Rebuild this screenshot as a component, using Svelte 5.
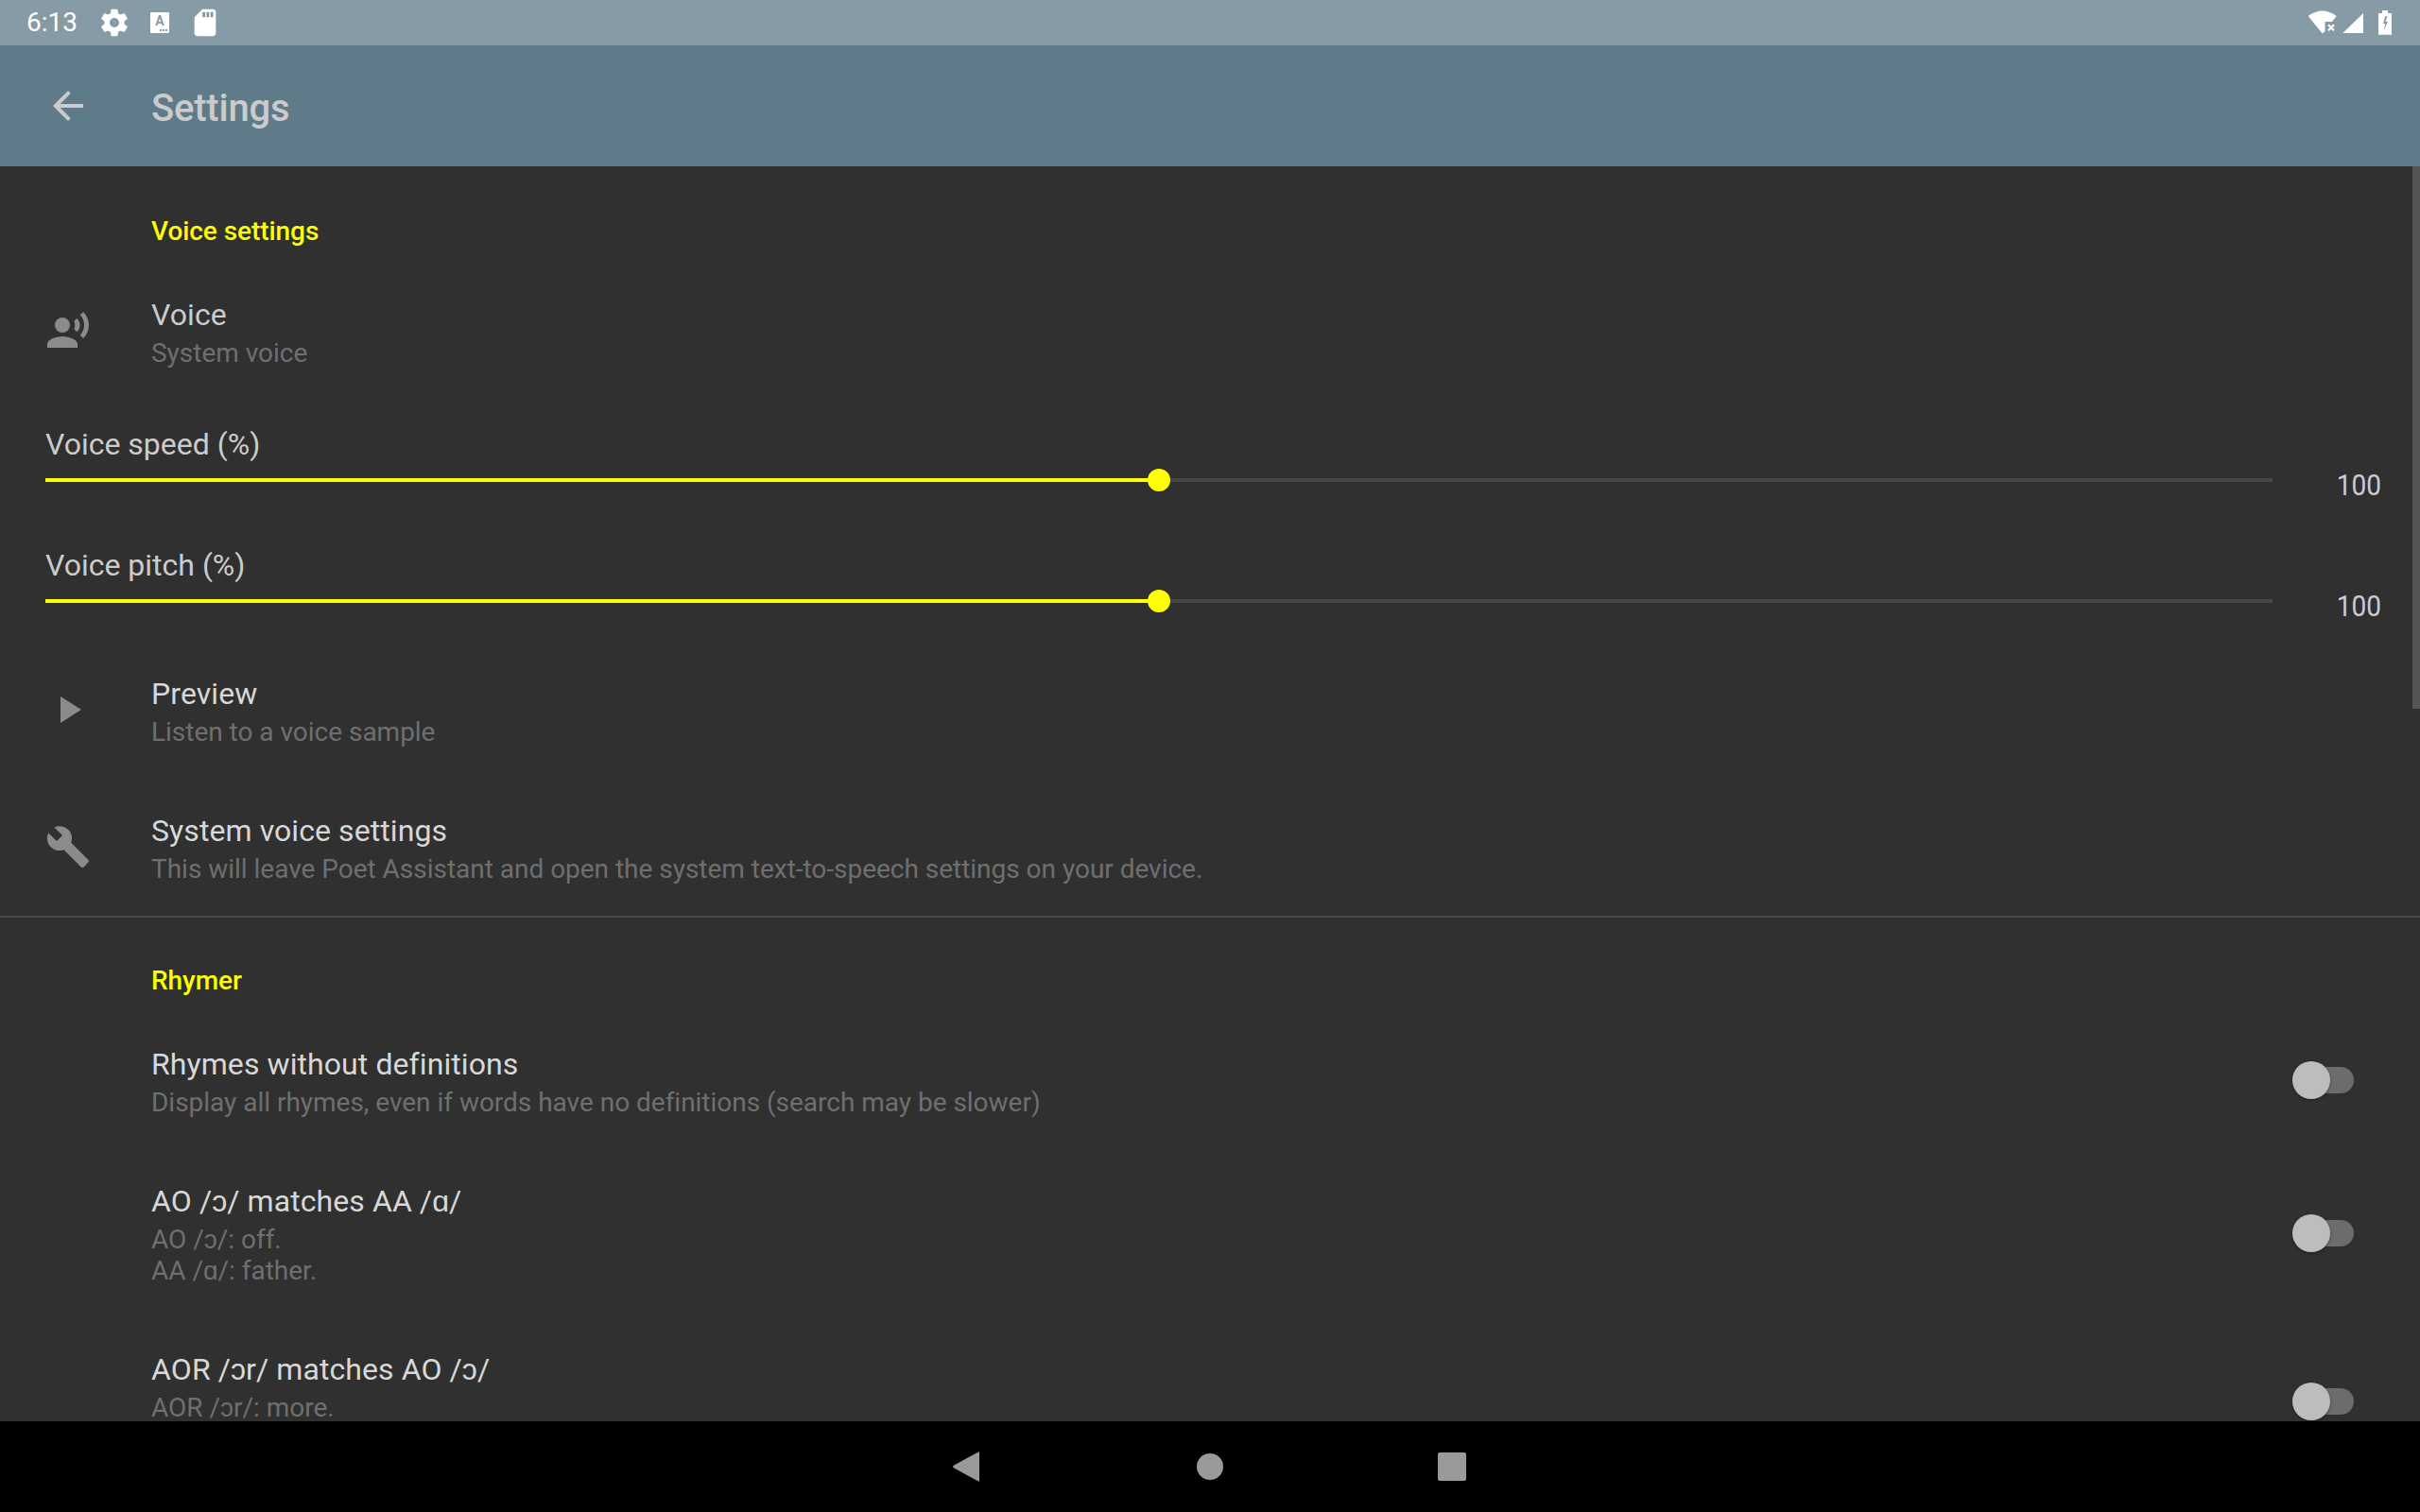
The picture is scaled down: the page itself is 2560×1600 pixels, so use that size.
<script>
    const sliders = [
        { label: "Voice speed (%)", value: 100, percent: 50 },
        { label: "Voice pitch (%)", value: 100, percent: 50 }
    ]

    const icons = {
        voice: "M9 15c-2.67 0-8 1.34-8 4v2h16v-2c0-2.66-5.33-4-8-4zm7.76-9.64l-1.68 1.69c.84 1.18.84 2.71 0 3.89l1.68 1.69c2.02-2.02 2.02-5.07 0-7.27zM20.07 2l-1.63 1.63c2.77 3.02 2.77 7.56 0 10.74L20.07 16c3.9-3.89 3.91-9.95 0-14zM9 5a4 4 0 1 0 0 8 4 4 0 0 0 0-8z",
        play: "M8 5v14l11-7z",
        build: "M22.7 19l-9.1-9.1c.9-2.3.4-5-1.5-6.9-2-2-5-2.4-7.4-1.3L9 6 6 9 1.6 4.7C.4 7.1.9 10.1 2.9 12.1c1.9 1.9 4.6 2.4 6.9 1.5l9.1 9.1c.4.4 1 .4 1.4 0l2.3-2.3c.5-.4.5-1.1.1-1.4z"
    }

    const rhymerRows = [
        {
            title: "Rhymes without definitions",
            summary: ["Display all rhymes, even if words have no definitions (search may be slower)"]
        },
        {
            title: "AO /ɔ/ matches AA /ɑ/",
            summary: ["AO /ɔ/: off.", "AA /ɑ/: father."]
        },
        {
            // second summary line is below the fold
            title: "AOR /ɔr/ matches AO /ɔ/",
            summary: ["AOR /ɔr/: more."],
            tall: true
        }
    ]
</script>

<div class="screen">
    <div class="status">
        <span class="time">6:13</span>
        <svg class="status-icon" viewBox="0 0 24 24"><path d="M19.43 12.98c.04-.32.07-.64.07-.98s-.03-.66-.07-.98l2.11-1.65c.19-.15.24-.42.12-.64l-2-3.46c-.12-.22-.39-.3-.61-.22l-2.49 1c-.52-.4-1.08-.73-1.69-.98l-.38-2.65C14.46 2.18 14.25 2 14 2h-4c-.25 0-.46.18-.49.42l-.38 2.65c-.61.25-1.17.59-1.69.98l-2.49-1c-.23-.09-.49 0-.61.22l-2 3.46c-.13.22-.07.49.12.64l2.11 1.65c-.04.32-.07.65-.07.98s.03.66.07.98l-2.11 1.65c-.19.15-.24.42-.12.64l2 3.46c.12.22.39.3.61.22l2.49-1c.52.4 1.08.73 1.69.98l.38 2.65c.03.24.24.42.49.42h4c.25 0 .46-.18.49-.42l.38-2.65c.61-.25 1.17-.59 1.69-.98l2.49 1c.23.09.49 0 .61-.22l2-3.46c.12-.22.07-.49-.12-.64l-2.11-1.65zM12 15.5c-1.93 0-3.5-1.57-3.5-3.5s1.57-3.5 3.5-3.5 3.5 1.57 3.5 3.5-1.57 3.5-3.5 3.5z"/></svg>
        <div class="keyboard">
            <span>A</span>
            <i></i>
        </div>
        <svg class="status-icon" viewBox="0 0 24 24"><path d="M18 2h-8L4.02 8 4 20c0 1.1.9 2 2 2h12c1.1 0 2-.9 2-2V4c0-1.1-.9-2-2-2zm-6 6h-2V4h2v4zm3 0h-2V4h2v4zm3 0h-2V4h2v4z"/></svg>

        <svg class="status-right" viewBox="0 0 90 48">
            <path d="M1.7 17Q16.7 6 31.7 17L27 23H19.5V33L16.7 35.5Z" />
            <path class="cross" d="M23 26.3l6 6M29 26.3l-6 6" />
            <path d="M38.3 35L60 14V35Z" />
            <path d="M80 11h6v3h4v22.7H76V14h4z" />
            <path class="bolt" d="M83.3 17.3L81 25h2.3l-1.6 7.7L86 22.700h-2.700l2.400-5.400z" />
        </svg>
    </div>

    <header class="appbar">
        <svg class="back" viewBox="0 0 24 24"><path d="M20 11H7.830l5.590-5.590L12 4l-8 8 8 8 1.410-1.410L7.830 13H20v-2z"/></svg>
        <h1>Settings</h1>
    </header>

    <main class="content">
        <div class="scrollbar"></div>

        <section class="voice">
            <h2>Voice settings</h2>

            <div class="row">
                <svg class="icon" viewBox="0 0 24 24"><path d={icons.voice}/></svg>
                <div class="text">
                    <p class="title dim">Voice</p>
                    <p class="summary">System voice</p>
                </div>
            </div>

            {#each sliders as slider}
                <div class="slider">
                    <p class="slider-label">{slider.label}</p>
                    <div class="slider-row">
                        <div class="track">
                            <div class="fill" style="width: {slider.percent}%"></div>
                            <div class="thumb" style="left: {slider.percent}%"></div>
                        </div>
                        <span class="value">{slider.value}</span>
                    </div>
                </div>
            {/each}

            <div class="row">
                <svg class="icon" viewBox="0 0 24 24"><path d={icons.play}/></svg>
                <div class="text">
                    <p class="title">Preview</p>
                    <p class="summary">Listen to a voice sample</p>
                </div>
            </div>

            <div class="row">
                <svg class="icon" viewBox="0 0 24 24"><path d={icons.build}/></svg>
                <div class="text">
                    <p class="title">System voice settings</p>
                    <p class="summary">This will leave Poet Assistant and open the system text-to-speech settings on your device.</p>
                </div>
            </div>
        </section>

        <section class="rhymer">
            <h2>Rhymer</h2>

            {#each rhymerRows as row}
                <div class="row toggle">
                    <div class="icon"></div>
                    <div class="text" class:tall={row.tall}>
                        <p class="title">{row.title}</p>
                        {#each row.summary as line}
                            <p class="summary">{line}</p>
                        {/each}
                    </div>
                    <div class="switch">
                        <div class="switch-thumb"></div>
                    </div>
                </div>
            {/each}
        </section>
    </main>

    <nav class="navbar">
        <svg viewBox="0 0 48 48"><path d="M35 4.500c.600-.400 1-.100 1 .600V35c0 .800-.500 1-1 .600L8.800 21.200c-.800-.600-.800-1.800 0-2.400z" transform="translate(0 4)"/></svg>
        <svg viewBox="0 0 48 48"><circle cx="24" cy="24" r="14"/></svg>
        <svg viewBox="0 0 48 48"><rect x="9" y="9" width="30" height="30" rx="2"/></svg>
    </nav>
</div>

<style>
    :global(body) {
        background: #000;
    }

    .screen {
        width: 2560px;
        height: 1600px;
        display: flex;
        flex-direction: column;
        overflow: hidden;
        font-family: Roboto, "Liberation Sans", sans-serif;
        background: #303030;
    }

    p, h1, h2 {
        margin: 0;
    }

    .status {
        height: 48px;
        flex-shrink: 0;
        display: flex;
        align-items: center;
        gap: 14px;
        padding: 0 30px 0 28px;
        box-sizing: border-box;
        background: #879ba7;
        color: #fff;
    }

    .time {
        font-size: 28px;
        line-height: 48px;
        width: 62px;
    }

    .status-icon {
        width: 34px;
        height: 34px;
        margin-top: -1px;
        fill: #fff;
    }

    .keyboard {
        width: 20px;
        height: 22px;
        margin: 0 7px;
        position: relative;
        background: #fff;
        border-radius: 1px;
        color: #879ba7;
        font-size: 14px;
        font-weight: 700;
        line-height: 18px;
        text-align: center;
    }

    .keyboard span {
        display: block;
    }

    .keyboard i {
        position: absolute;
        right: 1px;
        bottom: 2px;
        width: 9px;
        height: 2px;
        background: repeating-linear-gradient(90deg, #879ba7 0 2px, transparent 2px 3px);
    }

    .status-right {
        width: 90px;
        height: 48px;
        margin-left: auto;
        fill: #fff;
    }

    .cross {
        fill: none;
        stroke: #fff;
        stroke-width: 2.2;
    }

    .bolt {
        fill: #879ba7;
    }

    .appbar {
        height: 128px;
        flex-shrink: 0;
        display: flex;
        align-items: center;
        gap: 64px;
        padding-left: 48px;
        background: #5f7b89;
        color: #cbcbcb;
    }

    .appbar h1 {
        font-size: 40px;
        font-weight: 500;
        line-height: 48px;
        padding-top: 5px;
        letter-spacing: -0.2px;
    }

    .back {
        width: 48px;
        height: 48px;
        flex-shrink: 0;
        fill: #cbcbcb;
    }

    .icon {
        width: 48px;
        height: 48px;
        flex-shrink: 0;
        margin-bottom: 3px;
        fill: #8b8b8b;
    }

    .content {
        height: 1328px;
        flex-shrink: 0;
        position: relative;
        overflow: hidden;
    }

    .scrollbar {
        position: absolute;
        top: 0;
        right: 0;
        width: 8px;
        height: 574px;
        background: #555;
    }

    section h2 {
        padding-left: 160px;
        font-size: 28px;
        font-weight: 500;
        line-height: 36px;
        letter-spacing: -0.06px;
        color: #ff0;
    }

    .voice {
        border-bottom: 2px solid #484848;
    }

    .voice h2 {
        padding-top: 51px;
        padding-bottom: 15px;
    }

    .rhymer h2 {
        padding-top: 49px;
        padding-bottom: 15px;
    }

    .row {
        display: flex;
        align-items: center;
        gap: 64px;
        padding: 35px 70px 33px 48px;
    }

    .text {
        flex: 1;
    }

    .text.tall {
        min-height: 110px;
    }

    .title {
        font-size: 32px;
        line-height: 40px;
        letter-spacing: 0.08px;
        color: #d8d8d8;
    }

    .title.dim {
        color: #cccccc;
    }

    .summary {
        font-size: 28px;
        line-height: 33px;
        letter-spacing: -0.02px;
        color: #6f6f6f;
    }

    .title + .summary {
        margin-top: 4px;
    }

    .slider {
        height: 128px;
        box-sizing: border-box;
        padding: 28px 41px 0 48px;
    }

    .slider-label {
        font-size: 32px;
        line-height: 38px;
        color: #cccccc;
    }

    .slider-row {
        display: flex;
        align-items: center;
        height: 38px;
    }

    .track {
        width: 2356px;
        height: 4px;
        position: relative;
        background: #464646;
    }

    .fill {
        height: 100%;
        background: #ff0;
    }

    .thumb {
        position: absolute;
        top: -10px;
        width: 24px;
        height: 24px;
        margin-left: -12px;
        border-radius: 50%;
        background: #ff0;
    }

    .value {
        margin-left: auto;
        margin-top: 11px;
        font-size: 28px;
        line-height: 38px;
        color: #cccccc;
        transform: scaleY(1.14);
    }

    .switch {
        width: 65px;
        height: 28px;
        flex-shrink: 0;
        margin-bottom: 3px;
        position: relative;
        border-radius: 14px;
        background: #6c6c6c;
    }

    .switch-thumb {
        position: absolute;
        top: -6px;
        left: 0;
        width: 40px;
        height: 40px;
        border-radius: 50%;
        background: #bdbdbd;
        box-shadow: 0 1px 3px rgba(0, 0, 0, 0.4);
    }

    .navbar {
        height: 96px;
        flex-shrink: 0;
        display: flex;
        align-items: center;
        justify-content: center;
        gap: 208px;
        background: #000;
    }

    .navbar svg {
        width: 48px;
        height: 48px;
        fill: #9a9a9a;
    }
</style>
